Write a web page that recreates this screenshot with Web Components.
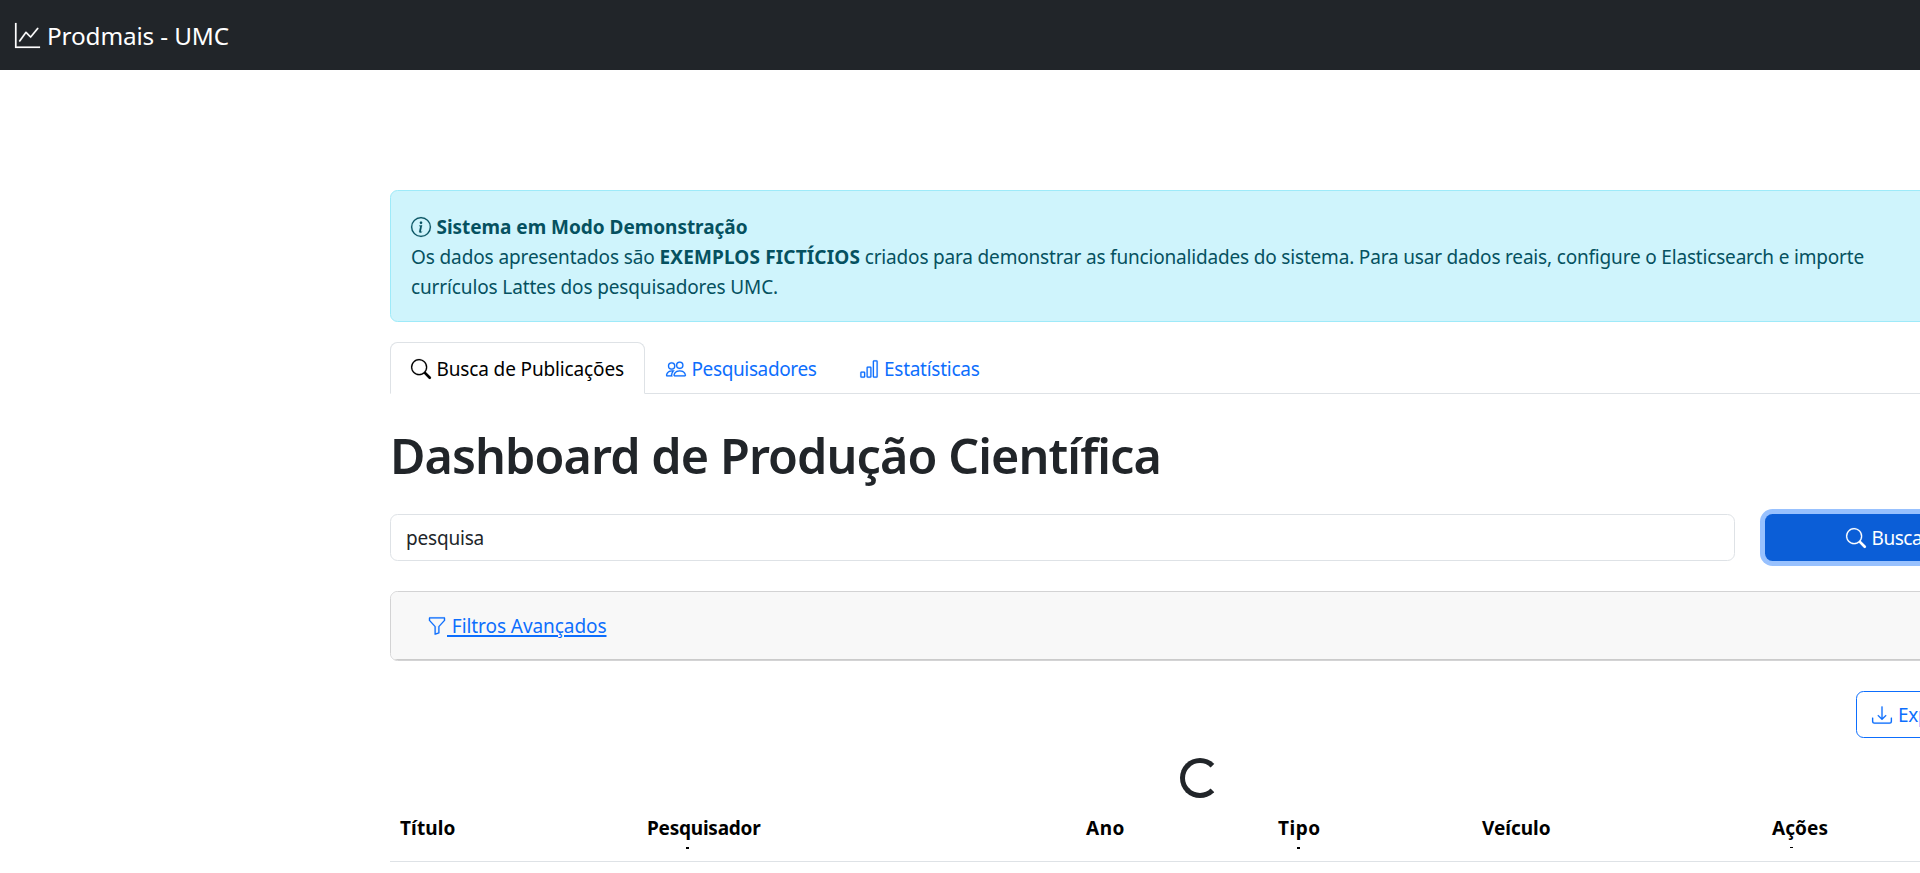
<!DOCTYPE html>
<html lang="pt-BR">
<head>
<meta charset="utf-8">
<title>Prodmais - UMC</title>
<style>
html,body{margin:0;background:#fff}
body{font-family:"Noto Sans","Open Sans",sans-serif;font-size:19px;line-height:30px;color:#212529;overflow:hidden;height:873px}
</style>
</head>
<body>
<app-navbar><fit-text w="182">Prodmais - UMC</fit-text></app-navbar>
<app-main></app-main>
<script>
const ICONS={
graph:'M0 0h1v15h15v1H0V0Zm14.817 3.113a.5.5 0 0 1 .07.704l-4.5 5.5a.5.5 0 0 1-.74.037L7.06 6.767l-3.656 5.027a.5.5 0 0 1-.808-.588l4-5.5a.5.5 0 0 1 .758-.06l2.609 2.61 4.15-5.073a.5.5 0 0 1 .704-.07Z',
info:'M8 15A7 7 0 1 1 8 1a7 7 0 0 1 0 14zm0 1A8 8 0 1 0 8 0a8 8 0 0 0 0 16zM8.93 6.588l-2.29.287-.082.38.45.083c.294.07.352.176.288.469l-.738 3.468c-.194.897.105 1.319.808 1.319.545 0 1.178-.252 1.465-.598l.088-.416c-.2.176-.492.246-.686.246-.275 0-.375-.193-.304-.533L8.93 6.588zM9 4.5a1 1 0 1 1-2 0 1 1 0 0 1 2 0z',
search:'M11.742 10.344a6.5 6.5 0 1 0-1.397 1.398h-.001c.03.04.062.078.098.115l3.85 3.85a1 1 0 0 0 1.415-1.414l-3.85-3.85a1.007 1.007 0 0 0-.115-.1zM12 6.5a5.5 5.5 0 1 1-11 0 5.5 5.5 0 0 1 11 0z',
people:'M15 14s1 0 1-1-1-4-5-4-5 3-5 4 1 1 1 1h8Zm-7.978-1A.261.261 0 0 1 7 12.996c.001-.264.167-1.03.76-1.72C8.312 10.629 9.282 10 11 10c1.717 0 2.687.63 3.24 1.276.593.69.758 1.457.76 1.72l-.008.002a.274.274 0 0 1-.014.002H7.022ZM11 7a2 2 0 1 0 0-4 2 2 0 0 0 0 4Zm3-2a3 3 0 1 1-6 0 3 3 0 0 1 6 0ZM6.936 9.28a5.88 5.88 0 0 0-1.23-.247A7.35 7.35 0 0 0 5 9c-4 0-5 3-5 4 0 .667.333 1 1 1h4.216A2.238 2.238 0 0 1 5 13c0-1.01.377-2.042 1.09-2.904.243-.294.526-.569.846-.816ZM4.92 10A5.493 5.493 0 0 0 4 13H1c0-.26.164-1.03.76-1.724.545-.636 1.492-1.256 3.16-1.275ZM1.5 5.5a3 3 0 1 1 6 0 3 3 0 0 1-6 0Zm3-2a2 2 0 1 0 0 4 2 2 0 0 0 0-4Z',
chart:'M4 11H2v3h2v-3zm5-4H7v7h2V7zm5-5v12h-2V2h2zm-2-1a1 1 0 0 0-1 1v12a1 1 0 0 0 1 1h2a1 1 0 0 0 1-1V2a1 1 0 0 0-1-1h-2zM6 7a1 1 0 0 1 1-1h2a1 1 0 0 1 1 1v7a1 1 0 0 1-1 1H7a1 1 0 0 1-1-1V7zm-5 4a1 1 0 0 1 1-1h2a1 1 0 0 1 1 1v3a1 1 0 0 1-1 1H2a1 1 0 0 1-1-1v-3z',
funnel:'M1.5 1.5A.5.5 0 0 1 2 1h12a.5.5 0 0 1 .5.5v2a.5.5 0 0 1-.128.334L10 8.692V13.5a.5.5 0 0 1-.342.474l-3 1A.5.5 0 0 1 6 14.5V8.692L1.628 3.834A.5.5 0 0 1 1.5 3.5v-2zm1 .5v1.308l4.372 4.858A.5.5 0 0 1 7 8.5v5.306l2-.666V8.5a.5.5 0 0 1 .128-.334L13.5 3.308V2h-11z',
download:'M.5 9.9a.5.5 0 0 1 .5.5v2.5a1 1 0 0 0 1 1h12a1 1 0 0 0 1-1v-2.5a.5.5 0 0 1 1 0v2.5a2 2 0 0 1-2 2H2a2 2 0 0 1-2-2v-2.5a.5.5 0 0 1 .5-.5zM7.646 11.854a.5.5 0 0 0 .708 0l3-3a.5.5 0 0 0-.708-.708L8.5 10.293V1.5a.5.5 0 0 0-1 0v8.793L5.354 8.146a.5.5 0 1 0-.708.708l3 3z'
};
function define(name,html,ready){
  customElements.define(name,class extends HTMLElement{
    connectedCallback(){
      if(this.shadowRoot)return;
      const t=document.createElement('template');
      t.innerHTML=html;
      this.attachShadow({mode:'open'}).append(document.importNode(t.content,true));
      if(ready)ready(this);
    }
  });
}
// Text run whose tracking is tuned so that it spans w pixels.
define('fit-text','<style>:host{display:inline-block;flex:none;white-space:pre;padding-top:var(--drop,0)}</style><slot></slot>',el=>{
  const w=+el.getAttribute('w'),n=el.textContent.length;
  requestAnimationFrame(()=>{
    if(w){el.style.letterSpacing=(w-el.getBoundingClientRect().width)/n+'px';}
  });
});
define('bi-icon','<style>:host{display:block;flex:none;width:var(--icon,20px);height:var(--icon,20px);margin-top:1px}svg{display:block;width:100%;height:100%;fill:currentColor;stroke:currentColor;stroke-width:.12;overflow:visible}</style><svg viewBox="0 0 16 16"><path/></svg>',el=>{
  el.shadowRoot.querySelector('path').setAttribute('d',ICONS[el.getAttribute('name')]);
});
define('app-navbar',`<style>:host{display:flex;align-items:center;height:70px;padding-left:15px;gap:7px;box-sizing:border-box;background:#212529;color:#fff;font-size:24.3px;line-height:38px;--icon:25px;--drop:2px}</style><bi-icon name="graph"></bi-icon><slot></slot>`);
define('demo-alert',`<style>
:host{display:block;box-sizing:border-box;height:132px;padding:20px;border:1px solid #9eeaf9;border-radius:7.5px;background:#cff4fc;color:#055160;--drop:2px}
div{display:flex;height:30px;align-items:center;white-space:nowrap}
.t{gap:5.5px}b{font-weight:700;flex:none}bi-icon{margin-top:2px}</style>
<div class="t"><bi-icon name="info"></bi-icon><b><fit-text w="311">Sistema em Modo Demonstração</fit-text></b></div>
<div><fit-text w="248.5">Os dados apresentados são </fit-text><b><fit-text w="200.5">EXEMPLOS FICTÍCIOS</fit-text></b><fit-text w="1004">&nbsp;criados para demonstrar as funcionalidades do sistema. Para usar dados reais, configure o Elasticsearch e importe</fit-text></div>
<div><fit-text w="367">currículos Lattes dos pesquisadores UMC.</fit-text></div>`);
define('nav-tab',`<style>
:host{display:flex;align-items:center;gap:5.5px;box-sizing:border-box;height:52px;padding:0 20px;border:1px solid transparent;border-radius:7.5px 7.5px 0 0;color:#0d6efd;--drop:2px}
:host([active]){color:#000;background:#fff;border-color:#dee2e6 #dee2e6 #fff}</style><slot></slot>`);
define('tab-bar','<style>:host{display:flex;height:51px;border-bottom:1px solid #dee2e6;margin-top:20px}</style><slot></slot>');
define('search-row',`<style>
:host{display:flex;gap:30px;height:47px}
.in{width:1345px;box-sizing:border-box;border:1px solid #dee2e6;border-radius:7.5px;padding:7.5px 15px;line-height:30px}
.btn{width:245px;border-radius:7.5px;background:#0b5ed7;color:#fff;box-shadow:0 0 0 5px #98c1fe;display:flex;align-items:center;justify-content:center;gap:6px}</style>
<div class="in"><fit-text w="78">pesquisa</fit-text></div>
<div class="btn"><bi-icon name="search"></bi-icon><fit-text w="58">Buscar</fit-text></div>`);
define('filter-card',`<style>
:host{display:block;box-sizing:border-box;height:70px;margin-top:30px;border:1px solid #d3d3d4;border-radius:7.5px;overflow:hidden}
div{display:flex;align-items:center;box-sizing:border-box;height:68px;padding:0 36px;background:#f8f8f8;border-bottom:1px solid #cbcbcb;color:#0d6efd}
fit-text{text-decoration:underline;text-decoration-thickness:2px;text-underline-offset:2px;text-decoration-skip-ink:auto}</style>
<div><bi-icon name="funnel"></bi-icon><fit-text w="159.5"> Filtros Avançados</fit-text></div>`);
define('export-row',`<style>
:host{display:flex;justify-content:flex-end;margin-top:30px}
div{display:flex;align-items:center;gap:6px;box-sizing:border-box;height:47px;width:154px;padding:0 15px;border:1px solid #0d6efd;border-radius:7.5px;color:#0d6efd}</style>
<div><bi-icon name="download"></bi-icon><fit-text w="75">Exportar</fit-text></div>`);
define('load-spinner','<style>:host{display:block;box-sizing:border-box;width:40px;height:40px;margin:20px auto 0;border:5px solid #212529;border-right-color:transparent;border-radius:50%}</style>');
define('table-head',`<style>
:host{display:grid;grid-template-columns:247px 439px 192px 204px 290px 248px;box-sizing:border-box;height:64px;padding-top:15px;border-bottom:1px solid #dee2e6;font-weight:700;color:#000}
</style><slot></slot>`);
define('head-cell',`<style>:host{display:block;padding-left:10px}
i{display:block;height:var(--h,2px);width:3px;margin:4px 0 0 var(--x);background:#000}</style><slot></slot>`,el=>{
  if(el.style.getPropertyValue('--x'))el.shadowRoot.append(document.createElement('i'));
});
define('app-main',`<style>
:host{display:block;width:1620px;margin:120px 0 0 390px}
h1{margin:31px 0 0;height:59px;line-height:60px;font-size:48.5px;font-weight:570;white-space:nowrap}
search-row{margin-top:30px}</style>
<demo-alert></demo-alert>
<tab-bar>
<nav-tab active><bi-icon name="search"></bi-icon><fit-text w="187.5">Busca de Publicações</fit-text></nav-tab>
<nav-tab><bi-icon name="people"></bi-icon><fit-text w="125">Pesquisadores</fit-text></nav-tab>
<nav-tab><bi-icon name="chart"></bi-icon><fit-text w="95.5">Estatísticas</fit-text></nav-tab>
</tab-bar>
<h1><fit-text w="771">Dashboard de Produção Científica</fit-text></h1>
<search-row></search-row>
<filter-card></filter-card>
<export-row></export-row>
<load-spinner></load-spinner>
<table-head>
<head-cell><fit-text w="55.5">Título</fit-text></head-cell>
<head-cell style="--x:39px"><fit-text w="113.5">Pesquisador</fit-text></head-cell>
<head-cell><fit-text w="39">Ano</fit-text></head-cell>
<head-cell style="--x:19px"><fit-text w="42.5">Tipo</fit-text></head-cell>
<head-cell><fit-text w="68.5">Veículo</fit-text></head-cell>
<head-cell style="--x:18px;--h:1px"><fit-text w="56">Ações</fit-text></head-cell>
</table-head>`);
</script>
</body>
</html>
